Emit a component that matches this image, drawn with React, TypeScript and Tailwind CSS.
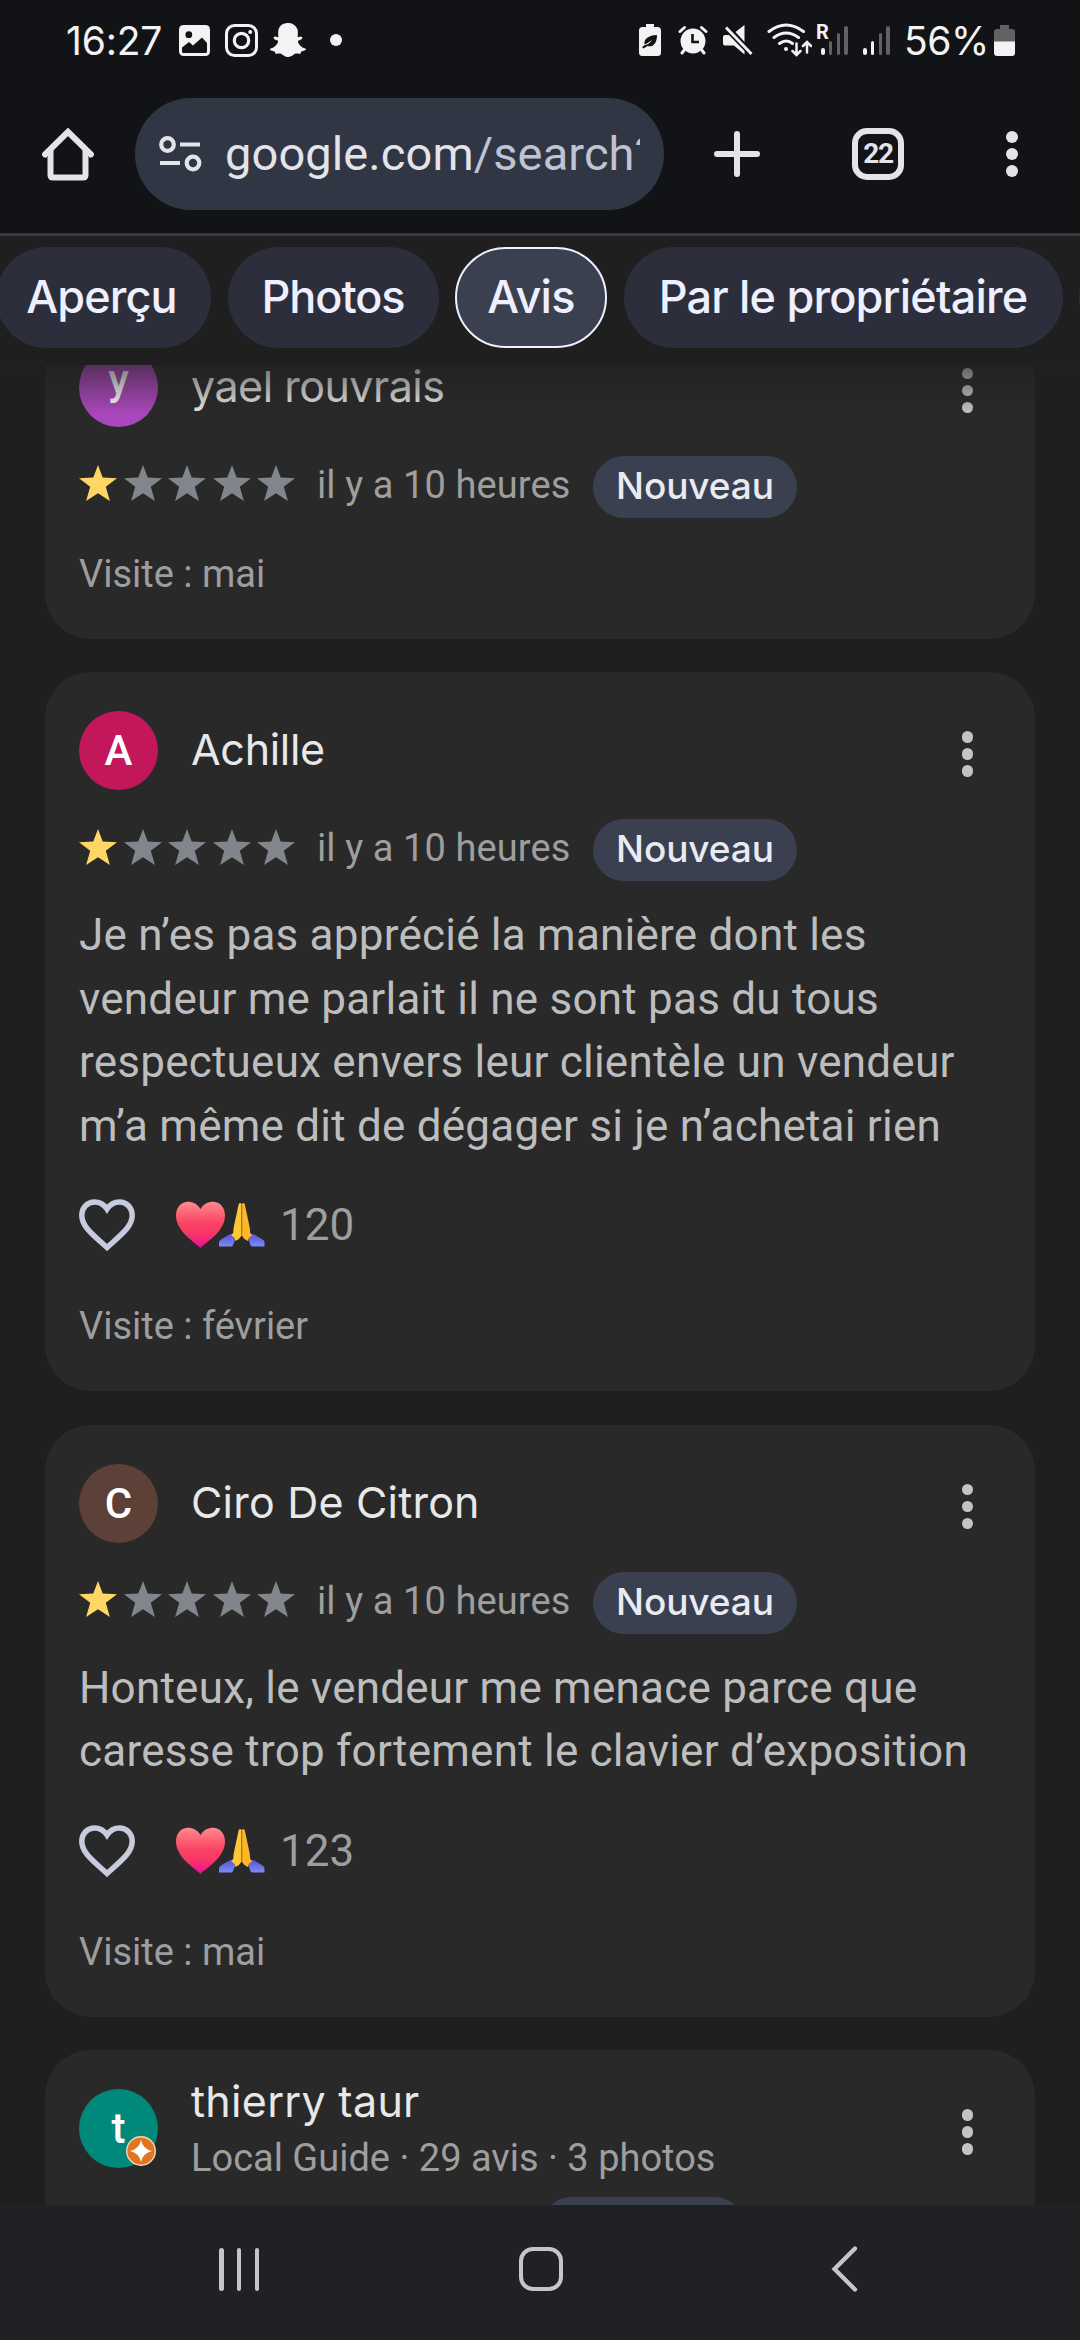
import { FaSnapchatGhost } from "react-icons/fa";

type Review = {
  name: string;
  nameTracking: string;
  initial: string;
  color: string;
  subtitle?: string;
  date?: string;
  text?: string[];
  likes?: number;
  visit?: string;
};

const tabs = [
  { label: "Aperçu", width: "w-[215px]", text: "pr-[4px] tracking-[-0.9px]" },
  { label: "Photos", width: "w-[211px]", text: "tracking-[-1.1px]" },
  { label: "Avis", width: "w-[152px]", text: "tracking-[-0.7px]", active: true },
  { label: "Par le propriétaire", width: "w-[439px]", text: "tracking-[-0.8px]" },
];

const reviews: Review[] = [
  {
    name: "yael rouvrais",
    nameTracking: "tracking-[-0.5px]",
    initial: "y",
    color: "pb-4 bg-[#ab47bc]",
    date: "il y a 10 heures",
    visit: "Visite : mai",
  },
  {
    name: "Achille",
    nameTracking: "tracking-[-0.3px]",
    initial: "A",
    color: "bg-[#c2185b]",
    date: "il y a 10 heures",
    text: [
      "Je n’es pas apprécié la manière dont les",
      "vendeur me parlait il ne sont pas du tous",
      "respectueux envers leur clientèle un vendeur",
      "m’a même dit de dégager si je n’achetai rien",
    ],
    likes: 120,
    visit: "Visite : février",
  },
  {
    name: "Ciro De Citron",
    nameTracking: "tracking-[0.2px]",
    initial: "C",
    color: "bg-[#5d4037]",
    date: "il y a 10 heures",
    text: [
      "Honteux, le vendeur me menace parce que",
      "caresse trop fortement le clavier d’exposition",
    ],
    likes: 123,
    visit: "Visite : mai",
  },
  {
    name: "thierry taur",
    nameTracking: "tracking-[0.3px]",
    initial: "t",
    color: "bg-[#00897b]",
    subtitle: "Local Guide · 29 avis · 3 photos",
  },
];

function StatusBar() {
  return (
    <div className="flex h-20 items-center pl-[66px] pr-[65px] text-[#f3f3f3]">
      <span className="w-[113px] font-[Inter,sans-serif] text-[39px] leading-none tracking-[-0.2px]">
        16:27
      </span>
      {/* gallery */}
      <svg className="h-[31px] w-[31px]" viewBox="0 0 31 31">
        <rect width="31" height="31" rx="4.5" fill="#f3f3f3" />
        <circle cx="9.8" cy="9.7" r="3.4" fill="#121316" />
        <path d="M3 22.5l7-5.5 4 3.5 9-8 5 5.5v8.5q0 1.5-1.5 1.5h-22Q3 28 3 26.5z" fill="#121316" />
      </svg>
      {/* instagram */}
      <svg className="ml-[15px] h-[33px] w-[33px]" viewBox="0 0 33 33" fill="none" stroke="#f3f3f3" strokeWidth="3">
        <rect x="1.5" y="1.5" width="30" height="30" rx="8" />
        <circle cx="16.5" cy="16.5" r="7.2" strokeWidth="3.2" />
        <circle cx="25.2" cy="8" r="2" fill="#f3f3f3" stroke="none" />
      </svg>
      <FaSnapchatGhost className="ml-[12px] h-[36px] w-[36px]" />
      <div className="ml-[24px] h-3 w-3 rounded-full bg-[#f3f3f3]" />

      <div className="ml-auto flex items-center">
        {/* battery saver */}
        <svg className="h-8 w-[22px]" viewBox="0 0 22 32">
          <path d="M7 0h8v3h3.5q3.5 0 3.5 3.5v22q0 3.5-3.5 3.5h-15Q0 32 0 28.5v-22Q0 3 3.5 3H7z" fill="#f3f3f3" />
          <path d="M5.5 20.5c-.7-6 4-9 12.5-9.5 0 9-4.5 12.5-9.5 11l-4 2.5-1.5-1.5 3-2c3-.5 5-2 7-5-3 2.5-5 3.5-7.5 4.5z" fill="#121316" />
        </svg>
        {/* alarm */}
        <svg className="ml-[17px] h-[30px] w-[30px]" viewBox="0 0 30 30">
          <g stroke="#f3f3f3" strokeWidth="3" strokeLinecap="round">
            <path d="M2 6.5L6.5 2.5M28 6.5L23.5 2.5M7 24l-3 4M23 24l3 4" />
          </g>
          <circle cx="15" cy="16" r="12.5" fill="#f3f3f3" />
          <path d="M14.5 9v8h6.5" stroke="#121316" strokeWidth="2.6" fill="none" />
        </svg>
        {/* muted */}
        <svg className="ml-[15px] h-[30px] w-[30px]" viewBox="0 0 30 30" fill="#f3f3f3">
          <path d="M12.5 7L21.5 0v17z" />
          <path d="M3 2.5L28.5 29" stroke="#121316" strokeWidth="6" />
          <path d="M3 2.5L28.5 29" stroke="#f3f3f3" strokeWidth="2.8" />
          <path d="M0 12q0-2 2-2h4L21.5 26v3.5L11 20.5H2q-2 0-2-2z" />
        </svg>
        {/* wifi */}
        <svg className="ml-[14px] h-[34px] w-[45px]" viewBox="0 0 45 34" fill="none" stroke="#f3f3f3" strokeWidth="3" strokeLinecap="round">
          <path d="M2 8.5Q19-4.5 36.5 8.5M7 14.5q12-9 24.5 0M12.5 20.5q7-5 13 0" />
          <circle cx="19" cy="26" r="2" fill="#f3f3f3" stroke="none" />
          <path d="M29.5 20.5v11M25.5 28l4 4 4-4M40 29.5V20M36 23l4-4 4 4" strokeWidth="2.5" />
        </svg>
        {/* roaming signal */}
        <div className="relative ml-[6px] flex h-[30px] w-[30px] items-end justify-between">
          <span className="absolute -left-0.5 -top-[3px] text-[20px] font-bold leading-none">R</span>
          <span className="ml-[3px] h-[7px] w-[3.5px] rounded-full bg-[#f3f3f3]" />
          <span className="h-[14px] w-[3.5px] rounded-full bg-[#616264]" />
          <span className="h-[22px] w-[3.5px] rounded-full bg-[#616264]" />
          <span className="h-[29px] w-[3.5px] rounded-full bg-[#616264]" />
        </div>
        <div className="ml-[15px] flex h-[30px] w-[27px] items-end justify-between">
          <span className="h-[7px] w-[3.5px] rounded-full bg-[#f3f3f3]" />
          <span className="h-[14px] w-[3.5px] rounded-full bg-[#f3f3f3]" />
          <span className="h-[22px] w-[3.5px] rounded-full bg-[#616264]" />
          <span className="h-[29px] w-[3.5px] rounded-full bg-[#616264]" />
        </div>
        <span className="ml-[14px] w-[90px] whitespace-nowrap font-[Inter,sans-serif] text-[39px] leading-none tracking-[-0.5px]">
          56%
        </span>
        <svg className="h-[31px] w-[21px]" viewBox="0 0 21 31">
          <path d="M6 0h9v4h3q3 0 3 3v10H0V7q0-3 3-3h3z" fill="#616264" />
          <path d="M0 16.5h21V28q0 3-3 3H3q-3 0-3-3z" fill="#f3f3f3" />
        </svg>
      </div>
    </div>
  );
}

function Toolbar() {
  return (
    <div className="flex h-[156px] items-center border-b-3 border-[#39393b] pb-[5px] pl-[42px] text-[#e3e3ea]">
      <svg className="h-[53px] w-[52px]" viewBox="0 0 52 53" fill="none" stroke="#e3e3ea" strokeWidth="6" strokeLinejoin="round" strokeLinecap="round">
        <path d="M3 26.5L26 3.8 49 26.5" strokeLinejoin="miter" />
        <path d="M8.5 22v25q0 2.5 2.5 2.5h30q2.5 0 2.5-2.5V22" />
      </svg>
      <div className="ml-[41px] flex h-28 w-[529px] items-center rounded-full bg-[#313644] pl-6">
        <svg className="h-[38px] w-[43px]" viewBox="0 0 43 38" fill="none" stroke="#e3e3ea" strokeWidth="4.2">
          <circle cx="8.5" cy="9.5" r="6.3" />
          <path d="M21 9.5h20M1 28h20" />
          <circle cx="34" cy="28" r="6.3" />
        </svg>
        <div className="ml-[23px] w-[415px] overflow-hidden whitespace-nowrap text-[47px] leading-[70px] tracking-[0.1px]">
          google.com<span className="text-[#bfc4d4]">/search?</span>
        </div>
      </div>
      <svg className="ml-[50px] h-[46px] w-[46px]" viewBox="0 0 46 46" stroke="#e3e3ea" strokeWidth="6" strokeLinecap="round">
        <path d="M23 3v40M3 23h40" />
      </svg>
      <div className="ml-[92px] flex h-[52px] w-[52px] items-center justify-center rounded-[15px] border-[6px] border-[#e3e3ea] text-[28px] font-bold leading-none tracking-[-1.2px]">
        22
      </div>
      <div className="ml-[102px] flex flex-col gap-[5px]">
        <span className="h-3 w-3 rounded-full bg-[#e3e3ea]" />
        <span className="h-3 w-3 rounded-full bg-[#e3e3ea]" />
        <span className="h-3 w-3 rounded-full bg-[#e3e3ea]" />
      </div>
    </div>
  );
}

function Tabs() {
  return (
    <nav className="flex h-[129px] shrink-0 gap-[16.5px] overflow-hidden bg-[#1f1f1f] pt-[11px]">
      {tabs.map((tab, i) => (
        <div
          key={tab.label}
          className={`flex h-[101px] shrink-0 items-center justify-center rounded-full pb-px font-[Inter,sans-serif] text-[45px] font-medium text-[#eef0ff] ${tab.width} ${tab.text} ${i === 0 ? "-ml-1" : ""} ${
            tab.active ? "border-2 border-[#eef0ff] bg-[#3b4050]" : "bg-[#2c2f3b]"
          }`}
        >
          {tab.label}
        </div>
      ))}
      <div className="h-[101px] w-[200px] shrink-0 rounded-full bg-[#2c2f3b]" />
    </nav>
  );
}

function Star({ filled }: { filled: boolean }) {
  return (
    <svg className="h-[36px] w-[38px]" viewBox="0 0 38 36" fill={filled ? "#fdd663" : "#80868b"}>
      <path d="M19 0l4.7 12.6L38 13.2 26.8 21.8 30.9 36 19 28.3 7.1 36l4.1-14.2L0 13.2l14.3-.6z" />
    </svg>
  );
}

function Reactions({ count }: { count: number }) {
  return (
    <div className="mt-[35px] flex h-16 items-center">
      <svg className="h-[52px] w-14" viewBox="0 0 56 52" fill="none" stroke="#c7cbdd" strokeWidth="5.5">
        <path d="M28 48.5C15 36.5 2.8 28 2.8 16.5 2.8 8.5 8.5 3 15.5 3c5 0 9.5 2.5 12.5 7C31 5.5 35.5 3 40.5 3c7 0 12.7 5.5 12.7 13.5C53.2 28 41 36.5 28 48.5z" />
      </svg>
      <svg className="ml-[41px] h-[48px] w-[89px]" viewBox="0 0 89 48">
        <defs>
          <linearGradient id="heart" x1="0" y1="0" x2="0" y2="1">
            <stop offset="0" stopColor="#ff8a8c" />
            <stop offset="0.45" stopColor="#fb4565" />
            <stop offset="0.7" stopColor="#f93567" />
            <stop offset="1" stopColor="#ee08a0" />
          </linearGradient>
          <linearGradient id="sleeve" x1="0" y1="0" x2="0" y2="1">
            <stop offset="0" stopColor="#5b50d6" />
            <stop offset="1" stopColor="#7b8cf8" />
          </linearGradient>
        </defs>
        <path d="M24.5 47C20 42 0 31 0 14.5 0 6 5.5.8 12 .8c5 0 9.500 2.200 12.500 7.200C27.500 3 32 .8 37 .8 43.500.8 49 6 49 14.500 49 31 29 42 24.500 47z" fill="url(#heart)" />
        <path d="M43 45.5v-4q0-2 2-3l9-5.500q4 1.500 5 6l-2 5q-.5 1.500-2 1.500z" fill="url(#sleeve)" />
        <path d="M88.5 45.5v-4q0-2-2-3l-9-5.500q-4 1.500-5 6l2 5q.5 1.500 2 1.500z" fill="url(#sleeve)" />
        <path d="M65.7 3.5q-.5-1.5-1.5-1.5-1.4 0-1.7 2l-4.500 21q-.6 3-.8 7l-2.200 2q3.500 2 4.500 6 4-1.500 6.200-5.500z" fill="#fec836" />
        <path d="M65.7 3.5q.5-1.5 1.5-1.5 1.4 0 1.7 2l4.500 21q.6 3 .8 7l2.200 2q-3.500 2-4.500 6-4-1.500-6.200-5.500z" fill="#fdb82a" />
        <path d="M65.7 4v31" stroke="#b8730a" strokeWidth="1.3" />
      </svg>
      <span className="ml-[15px] text-[44px] leading-none text-[#9e9e9e]">{count}</span>
    </div>
  );
}

function ReviewCard({ review }: { review: Review }) {
  return (
    <article className="shrink-0 rounded-[46px] bg-[#292929] px-[34px] pb-[39px] pt-[39px]">
      <div className="flex h-[79px] items-center">
        <div
          className={`relative flex h-[79px] w-[79px] items-center justify-center rounded-full text-[42px] font-medium text-white ${review.color}`}
        >
          {review.initial}
          {review.subtitle && (
            <svg className="absolute bottom-0.5 right-0.5 h-[30px] w-[30px]" viewBox="0 0 30 30">
              <circle cx="15" cy="15" r="14.3" fill="#e37421" stroke="#f3d9b4" strokeWidth="1.4" />
              <path d="M15 4q1.8 9 11 11-9.2 2-11 11-1.8-9-11-11 9.2-2 11-11z" fill="#fff" />
            </svg>
          )}
        </div>
        <div className={`ml-[33px] flex flex-col ${review.subtitle ? "-mt-px" : "-mt-[3px]"}`}>
          <span
            className={`font-[Inter,sans-serif] text-[43px] leading-[58px] text-[#e8e8e8] ${review.nameTracking}`}
          >
            {review.name}
          </span>
          {review.subtitle && (
            <span className="mt-px text-[38px] leading-[54px] text-[#9e9e9e]">{review.subtitle}</span>
          )}
        </div>
        <div className="ml-auto mr-[28px] mt-[7px] flex flex-col gap-[5.5px]">
          <span className="h-[11.5px] w-[11.5px] rounded-full bg-[#c4c4c4]" />
          <span className="h-[11.5px] w-[11.5px] rounded-full bg-[#c4c4c4]" />
          <span className="h-[11.5px] w-[11.5px] rounded-full bg-[#c4c4c4]" />
        </div>
      </div>

      <div className="mt-[29px] flex h-[62px] items-center">
        <div className="flex gap-[6.5px] pb-[7px]">
          {[1, 2, 3, 4, 5].map((n) => (
            <Star key={n} filled={n === 1} />
          ))}
        </div>
        <div className="ml-[22px] w-[255px] whitespace-nowrap pb-[4px] text-[38px] leading-none tracking-[0.1px] text-[#9e9e9e]">
          {review.date}
        </div>
        <span
          className={`flex h-[62px] w-[204px] items-center justify-center rounded-full bg-[#3b4050] pb-0.5 font-[Inter,sans-serif] text-[37px] font-medium tracking-[-0.1px] text-[#e9ebf3] ${
            review.date ? "ml-[21px]" : "-ml-[31px]"
          }`}
        >
          Nouveau
        </span>
      </div>

      {review.text && (
        <p className="mt-[23px] whitespace-nowrap text-[44px] leading-[63.5px] tracking-[0.23px] text-[#bdbdbd]">
          {review.text.map((line) => (
            <span key={line} className="block">
              {line}
            </span>
          ))}
        </p>
      )}
      {review.likes && <Reactions count={review.likes} />}
      {review.visit && (
        <p
          className={`text-[38px] leading-[52px] text-[#9e9e9e] ${review.likes ? "mt-[43px]" : "mt-[30px]"}`}
        >
          {review.visit}
        </p>
      )}
    </article>
  );
}

function NavBar() {
  return (
    <div className="flex h-[135px] shrink-0 items-center bg-[#202125] pl-[219px] pb-[7px]">
      <div className="flex w-[40px] justify-between">
        <span className="h-[43px] w-[4.5px] rounded-full bg-[#c6c6c8]" />
        <span className="h-[43px] w-[4.5px] rounded-full bg-[#c6c6c8]" />
        <span className="h-[43px] w-[4.5px] rounded-full bg-[#c6c6c8]" />
      </div>
      <div className="ml-[260px] h-[44px] w-[44px] rounded-[14px] border-[4.5px] border-[#c6c6c8]" />
      <svg className="ml-[268px] h-[46px] w-[27px]" viewBox="0 0 27 46" fill="none" stroke="#c6c6c8" strokeWidth="4.3" strokeLinecap="round">
        <path d="M24 2.5L3.5 23 24 43.5" />
      </svg>
    </div>
  );
}

export default function App() {
  return (
    <div className="flex h-[2340px] w-[1080px] flex-col overflow-hidden bg-[#1f1f1f] font-[Roboto,sans-serif]">
      <header className="shrink-0 bg-[#121316]">
        <StatusBar />
        <Toolbar />
      </header>
      <Tabs />
      <main className="relative min-h-0 flex-1 overflow-hidden">
        <div className="-mt-[56.5px] flex flex-col gap-[33.5px] px-[45px]">
          {reviews.map((review) => (
            <ReviewCard key={review.name} review={review} />
          ))}
        </div>
        <div className="absolute inset-x-0 top-0 h-[50px] bg-linear-to-b from-[#1f1f1f]/60 to-[#1f1f1f]/0" />
      </main>
      <NavBar />
    </div>
  );
}
